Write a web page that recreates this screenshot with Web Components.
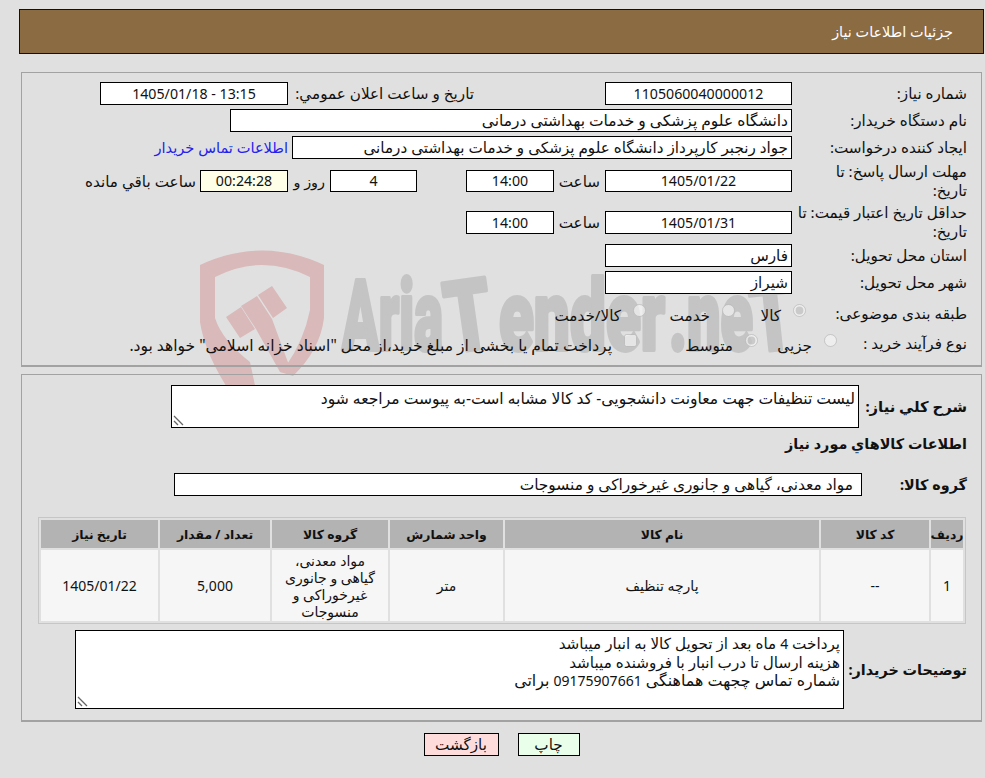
<!DOCTYPE html>
<html lang="fa" dir="rtl">
<head>
<meta charset="utf-8">
<title>جزئیات اطلاعات نیاز</title>
<style>
html,body{margin:0;padding:0;background:#e0e0e0;}
body{font:15.2px/19px "Noto Sans","DejaVu Sans",sans-serif;color:#111;width:985px;height:778px;overflow:hidden;position:relative;direction:rtl;}
.n{font-size:14px}
.l3{font-size:15.9px}
</style>
</head>
<body>
<need-watermark></need-watermark>
<need-page>
  <need-header>جزئیات اطلاعات نیاز</need-header>
  <need-panel style="--pm:18px;--ph:295px;--pt:9px">
    <need-row style="--h:23px;--mb:4px">
      <need-label style="--w:175px">شماره نیاز:</need-label>
      <need-box style="--w:187px" center>1105060040000012</need-box>
      <need-label style="--w:312px;--pr:131px;--ws:nowrap">تاریخ و ساعت اعلان عمومي:</need-label>
      <need-box style="--w:188px;--ms:5px" center>13:15 - 1405/01/18</need-box>
    </need-row>
    <need-row style="--h:23px;--mb:4px">
      <need-label style="--w:175px">نام دستگاه خریدار:</need-label>
      <need-box style="--w:562px;--fs:15.5px">دانشگاه علوم پزشکی و خدمات بهداشتی درمانی</need-box>
    </need-row>
    <need-row style="--h:23px;--mb:3px">
      <need-label style="--w:175px">ایجاد کننده درخواست:</need-label>
      <need-box style="--w:500px">جواد رنجبر کارپرداز دانشگاه علوم پزشکی و خدمات بهداشتی درمانی</need-box>
      <need-link style="--ms:4px">اطلاعات تماس خریدار</need-link>
    </need-row>
    <need-row style="--h:38px;--mb:3px">
      <need-label style="--w:175px">مهلت ارسال پاسخ: تا<br>تاریخ:</need-label>
      <need-box style="--w:187px;--bh:22px" center>1405/01/22</need-box>
      <need-label style="--w:51px;--pr:5px">ساعت</need-label>
      <need-box style="--w:88px;--bh:22px" center>14:00</need-box>
      <need-box style="--w:87px;--bh:22px;--ms:49px" center>4</need-box>
      <need-label style="--w:42px;--pr:5px;--fs:14.4px">روز و</need-label>
      <need-box style="--w:88px;--bh:22px;--bg:#ffffe8" center>00:24:28</need-box>
      <need-label style="--w:118px;--pr:4px;--ws:nowrap">ساعت باقي مانده</need-label>
    </need-row>
    <need-row style="--h:38px;--mb:3px">
      <need-label style="--w:175px;--ws:nowrap">حداقل تاریخ اعتبار قیمت: تا<br>تاریخ:</need-label>
      <need-box style="--w:187px" center>1405/01/31</need-box>
      <need-label style="--w:51px;--pr:5px">ساعت</need-label>
      <need-box style="--w:88px" center>14:00</need-box>
    </need-row>
    <need-row style="--h:23px;--mb:4px">
      <need-label style="--w:175px">استان محل تحویل:</need-label>
      <need-box style="--w:187px">فارس</need-box>
    </need-row>
    <need-row style="--h:23px;--mb:9px">
      <need-label style="--w:175px">شهر محل تحویل:</need-label>
      <need-box style="--w:187px">شیراز</need-box>
    </need-row>
    <need-row style="--h:20px;--mb:10px">
      <need-label style="--w:161px">طبقه بندی موضوعی:</need-label>
      <need-choice style="--w:71px" checked>کالا</need-choice>
      <need-choice style="--w:89px">خدمت</need-choice>
      <need-choice>کالا/خدمت</need-choice>
    </need-row>
    <need-row style="--h:20px">
      <need-label style="--w:130px">نوع فرآیند خرید :</need-label>
      <need-choice style="--w:79px">جزیی</need-choice>
      <need-choice style="--w:121px" checked>متوسط</need-choice>
      <need-choice box style="--fs:15.55px">پرداخت تمام یا بخشی از مبلغ خرید،از محل "اسناد خزانه اسلامی" خواهد بود.</need-choice>
    </need-row>
  </need-panel>
  <need-panel style="--pm:7px;--ph:348px;--pt:10px">
    <need-row style="--h:43px;--mb:6px">
      <need-label style="--w:108px;--fs:14.8px" strong>شرح کلي نیاز:</need-label>
      <need-area style="--w:688px;--ah:43px;--fs:15.6px">لیست تنظیفات جهت معاونت دانشجویی- کد کالا مشابه است-به پیوست مراجعه شود</need-area>
    </need-row>
    <need-row style="--h:19px;--mb:20px">
      <need-label strong style="--w:400px">اطلاعات کالاهاي مورد نیاز</need-label>
    </need-row>
    <need-row style="--h:23px;--mb:21px">
      <need-label style="--w:105px" strong>گروه کالا:</need-label>
      <need-box style="--w:688px;--pad:8px;--fs:15.4px">مواد معدنی، گیاهی و جانوری غیرخوراکی و منسوجات</need-box>
    </need-row>
    <need-table>
      <need-cell head>ردیف</need-cell><need-cell head>کد کالا</need-cell><need-cell head>نام کالا</need-cell><need-cell head>واحد شمارش</need-cell><need-cell head>گروه کالا</need-cell><need-cell head>تعداد / مقدار</need-cell><need-cell head>تاریخ نیاز</need-cell>
      <need-cell>1</need-cell><need-cell>--</need-cell><need-cell>پارچه تنظیف</need-cell><need-cell>متر</need-cell><need-cell>مواد معدنی، گیاهی و جانوری غیرخوراکی و منسوجات</need-cell><need-cell>5,000</need-cell><need-cell>1405/01/22</need-cell>
    </need-table>
    <need-row style="--h:79px;--rt:6px">
      <need-label style="--w:123px" strong>توضیحات خریدار:</need-label>
      <need-area style="--w:769px;--ah:79px">پرداخت <span class="n">4</span> ماه بعد از تحویل کالا به انبار میباشد<br>هزینه ارسال تا درب انبار با فروشنده میباشد<br><span class="l3">شماره تماس چجهت هماهنگی <span class="n">09175907661</span> براتی</span></need-area>
    </need-row>
  </need-panel>
  <need-actions>
    <need-button style="--w:62px;--bg:#eaffea">چاپ</need-button>
    <need-button style="--w:75px;--bg:#ffdcdc">بازگشت</need-button>
  </need-actions>
</need-page>
<script>
function def(name, css, html){
  customElements.define(name, class extends HTMLElement{
    constructor(){
      super();
      const r=this.attachShadow({mode:'open'});
      r.innerHTML='<style>'+css+'</style>'+(typeof html==='function'?html(this):html);
    }
  });
}
def('need-page',':host{display:block;position:relative;padding-top:9px}','<slot></slot>');
def('need-header',':host{display:flex;align-items:center;box-sizing:border-box;height:45px;margin-right:1px;margin-left:19px;padding-right:30px;background:#8b6b42;border:1px solid #111;color:#fff;font-size:14.4px}','<slot></slot>');
def('need-panel',':host{display:block;box-sizing:border-box;height:var(--ph);margin:var(--pm) 3px 0 3px;margin-left:21px;padding-top:var(--pt);border:1px solid #a2a2a2;border-bottom-width:2px}','<slot></slot>');
def('need-row',':host{display:flex;align-items:center;height:var(--h);margin-top:var(--rt,0);margin-bottom:var(--mb,0);padding-right:14px}','<slot></slot>');
def('need-label',':host{display:block;box-sizing:border-box;flex:none;width:var(--w,auto);padding-right:var(--pr,0);margin-inline-start:var(--ms,0);white-space:var(--ws,normal);font-size:var(--fs,15.2px)}:host([strong]){font-weight:700;font-size:var(--fs,14.4px)}','<slot></slot>');
def('need-box',':host{display:block;box-sizing:border-box;flex:none;width:var(--w);height:var(--bh,23px);line-height:calc(var(--bh,23px) - 2px);margin-inline-start:var(--ms,0);padding:0 var(--pad,3px);background:var(--bg,#fff);border:1px solid #000;white-space:nowrap;overflow:hidden;font-size:var(--fs,15.2px)}:host([center]){text-align:center;font-size:14.2px}','<slot></slot>');
def('need-link',':host{display:block;flex:none;margin-inline-start:var(--ms,0);color:#2222ee;white-space:nowrap;font-size:14.6px}','<slot></slot>');
def('need-choice',':host{display:flex;align-items:center;box-sizing:border-box;flex:none;width:var(--w,auto);white-space:nowrap;gap:12px;font-size:var(--fs,15.2px)}input{margin:-5px 0 0;width:13px;height:13px;flex:none}span{padding-top:4px}',
  el=>'<input tabindex="-1" disabled type="'+(el.hasAttribute('box')?'checkbox':'radio')+'"'+(el.hasAttribute('checked')?' checked':'')+'><span><slot></slot></span>');
def('need-area',':host{display:block;position:relative;box-sizing:border-box;flex:none;width:var(--w);height:var(--ah);padding:3px;background:#fff;border:1px solid #000;line-height:18px;font-size:var(--fs,15.2px)}svg{position:absolute;left:1px;bottom:1px}','<slot></slot><svg width="11" height="11" viewBox="0 0 11 11" fill="none" stroke="#666" stroke-width="1.3"><path d="M1 1 L10 10 M1 6 L5 10"/></svg>');
def('need-table',':host{display:grid;grid-template-columns:32px 108px 314px 113px 116px 110px 117px;gap:2px;box-sizing:border-box;width:928px;margin-right:15px;padding:2px;border:1px solid #c6c6c6;font-size:14px}','<slot></slot>');
def('need-cell',':host{display:flex;align-items:center;justify-content:center;text-align:center;background:#f6f6f6;min-height:71px;line-height:17px;padding:0 6px;box-sizing:border-box}:host([head]){background:#b3b3b3;min-height:28px;font-weight:700;padding:0;font-size:12.4px;white-space:nowrap}','<slot></slot>');
def('need-actions',':host{display:flex;justify-content:center;gap:19px;margin:11px 1px 0 0;padding-left:19px}','<slot></slot>');
def('need-button',':host{display:flex;align-items:center;justify-content:center;box-sizing:border-box;width:var(--w);height:23px;background:var(--bg);border:1px solid #000}','<slot></slot>');
def('need-watermark',':host{display:block;position:absolute;left:195px;top:245px;width:620px;height:150px;pointer-events:none}svg{display:block}text{font:900 98px "Roboto","Liberation Sans",sans-serif;fill:#c4c4c4;stroke:#c4c4c4;stroke-width:4;stroke-linejoin:round}',
`<svg width="620" height="150" viewBox="195 245 620 150" direction="ltr">
<path fill="#d9b9b9" fill-rule="evenodd" d="M200 265 Q262 236 324 265 V318 Q320 350 293 376 L286 366 Q304 340 310 310 V277 Q262 253 215 277 V318 Q222 340 250 362 L257 395 H232 Q205 355 200 322 Z"/>
<path fill="#d9b9b9" d="M226 317 L241 307 L255 329 L240 338 Z M241 306 L257 296 L272 319 L293 376 L280 372 L256 329 Z M258 295 L272 286 L287 308 L273 318 Z"/>
<text x="342" y="350" textLength="101" lengthAdjust="spacingAndGlyphs">Aria</text>
<text x="450" y="350" textLength="46" lengthAdjust="spacingAndGlyphs" transform="rotate(-8 470 350)">T</text>
<text x="499" y="350" textLength="166" lengthAdjust="spacingAndGlyphs">ender</text>
<text x="669" y="350" textLength="84" lengthAdjust="spacingAndGlyphs">.ne</text>
<text x="754" y="350" textLength="44" lengthAdjust="spacingAndGlyphs" transform="rotate(-6 775 350)">T</text>
</svg>`);
</script>
</body>
</html>
